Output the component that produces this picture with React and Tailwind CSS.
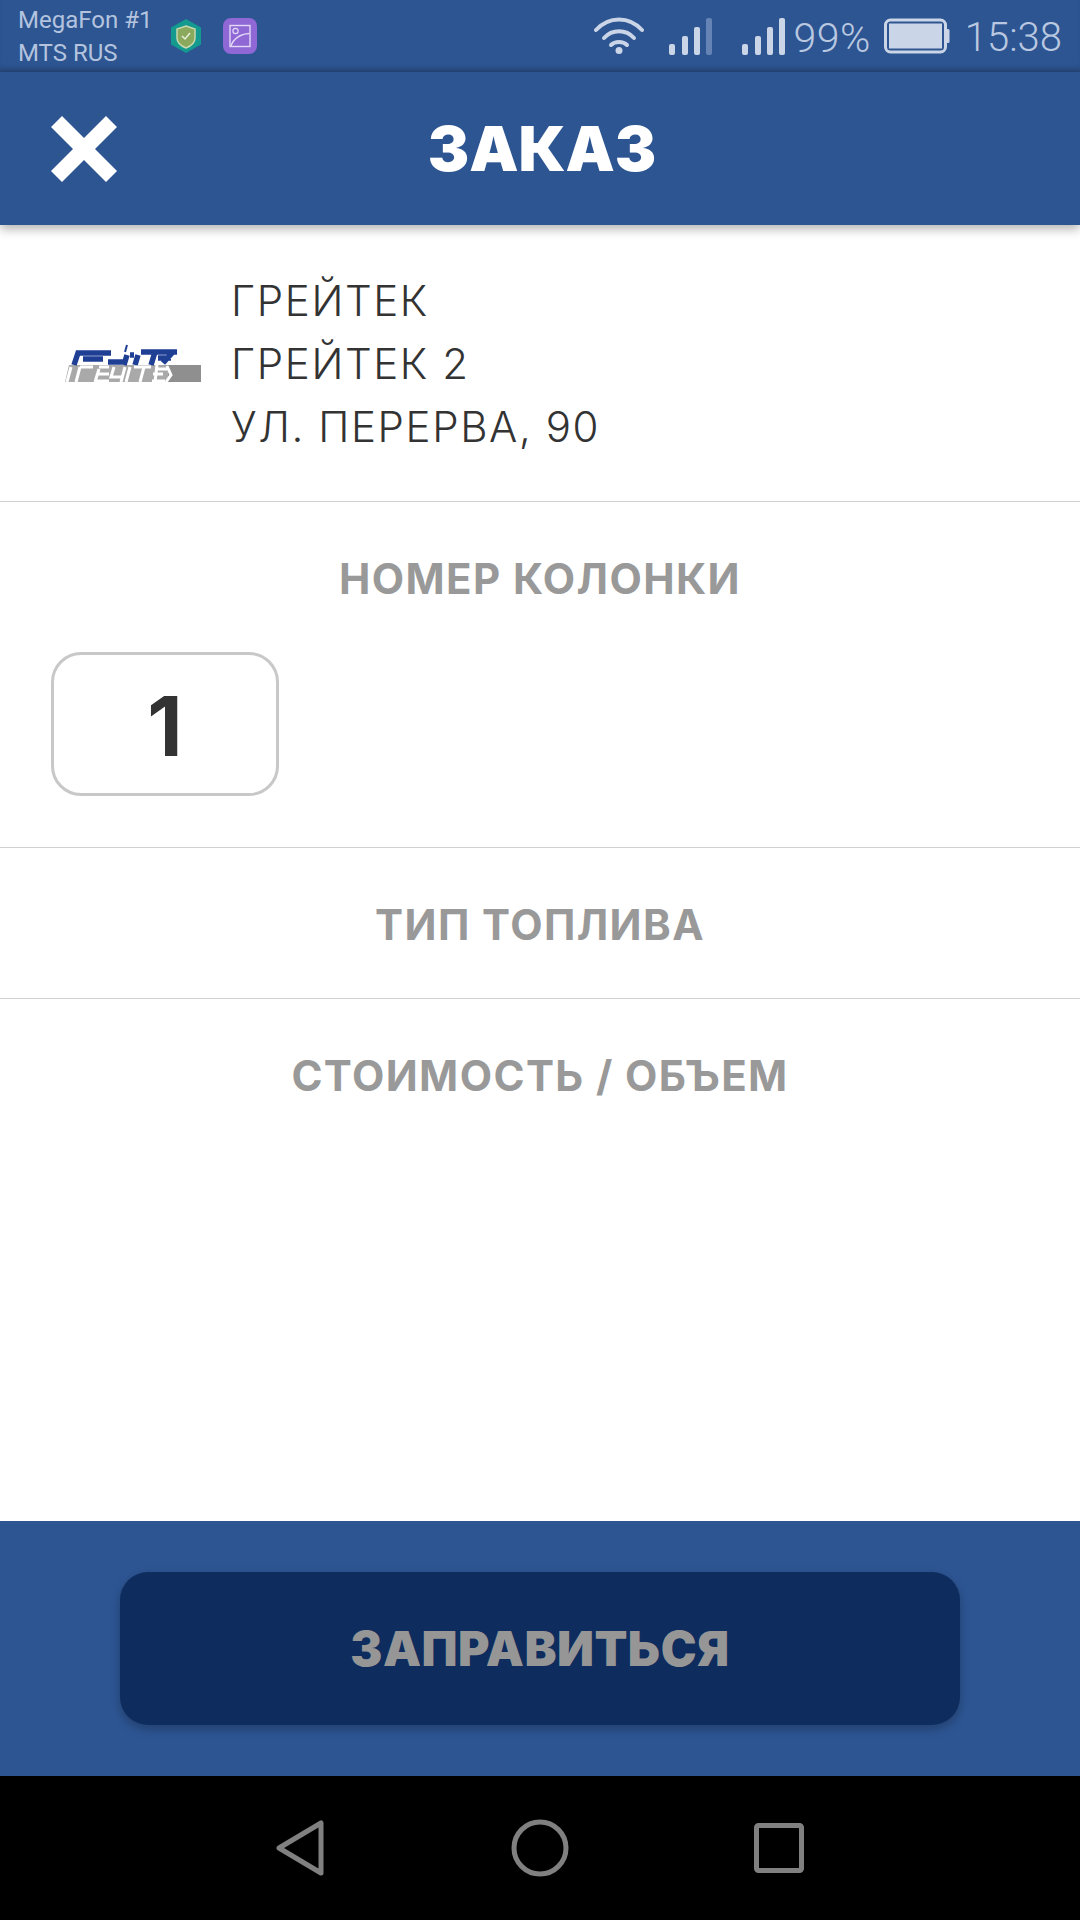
const sans = { fontFamily: '"Inter","Liberation Sans",sans-serif' };

function Signal({ dim }) {
  return (
    <svg width="43" height="37" viewBox="0 0 43 37">
      <g fill="#cbd5e8">
        <rect x="0" y="26" width="6" height="11" rx="2" />
        <rect x="13" y="18" width="6" height="19" rx="2" />
        <rect x="25" y="9" width="6" height="28" rx="2" />
        <rect x="37" y="0" width="6" height="37" rx="2" fill={dim ? "#6583b4" : "#cbd5e8"} />
      </g>
    </svg>
  );
}

function Logo() {
  return (
    <svg className="blur-[0.6px]" width="138" height="40" viewBox="0 0 138 40">
      <path d="M2 39 L6 22 H138 V39 Z" fill="#a9a9a9" />
      <rect x="105" y="22" width="33" height="17" fill="#8f8f8f" />
      <g fill="none" stroke="#1f3f95" strokeWidth="5.500">
        <path d="M11 22 L15 10 H48" />
        <path d="M20 16 H40 M45 19 H60 M64 12 L61 22 M67 12 H71 M75 12 L72 22 M78 9 H114 M92 9 L88 22 M95 15 H108 M110 9 L100 20" />
        <path d="M62 9 L64 2" strokeWidth="2" />
      </g>
      <g fill="none" stroke="#ffffff" strokeWidth="3">
        <path d="M8 24 L4 39 M17 24 L13 39 M17 24 H30 M36 26 L32 39 M36 24 H46 M34 31 H46 M33 38 H46 M51 24 L48 34 H60 M62 24 L58 39 M67 24 L63 39 M71 24 H88 M81 24 L77 39 M92 26 H104 M90 31 H100 M89 38 H102" />
        <path d="M94 22 L92 39" />
      </g>
      <path d="M103 39 L108 32 L104 23" fill="none" stroke="#ffffff" strokeWidth="3" />
    </svg>
  );
}

function Divider() {
  return <div className="h-px bg-[#d0d0d0]" />;
}

function SectionTitle({ children }) {
  return (
    <div className="text-center text-[42px] leading-[46px] font-bold tracking-[1.4px] text-[#999999]">
      {children}
    </div>
  );
}

export default function App() {
  return (
    <div className="w-[1080px] h-[1920px] flex flex-col bg-white overflow-hidden" style={sans}>
      <div className="h-[72px] bg-[#2d5592] flex items-center justify-between pl-[18px] pr-[18px] shadow-[inset_0_-6px_6px_-4px_rgba(0,0,0,0.25)]" style={{ fontFamily: "Roboto, sans-serif" }}>
        <div className="flex items-center">
          <div className="text-[24px] leading-[33px] text-[#b4c4de] w-[152px] whitespace-nowrap pt-[2px]">
            <div>MegaFon #1</div>
            <div>MTS RUS</div>
          </div>
          <svg width="32" height="36" viewBox="0 0 32 36">
            <path d="M16 1 L31 9.500 V26.500 L16 35 L1 26.500 V9.500 Z" fill="#149a8f" />
            <path d="M16 8 L25 11 V20 C25 25 21 28 16 30 C11 28 7 25 7 20 V11 Z" fill="#8aa95c" stroke="#c8d8b0" strokeWidth="1.500" />
            <path d="M12 18 L15 21 L20 15" fill="none" stroke="#e8f0d8" strokeWidth="1.500" />
          </svg>
          <svg className="ml-[21px]" width="34" height="36" viewBox="0 0 34 36">
            <rect width="34" height="36" rx="8" fill="#9068d6" />
            <rect x="7" y="7.500" width="20" height="21" fill="none" stroke="#e2d8f5" strokeWidth="1.400" />
            <circle cx="12.500" cy="13" r="2.600" fill="none" stroke="#e2d8f5" strokeWidth="1.200" />
            <path d="M8 28 C10 21 17 16 26.500 15.500" fill="none" stroke="#e2d8f5" strokeWidth="1.400" />
          </svg>
        </div>
        <div className="flex items-center text-[#b9c8e0]">
          <svg width="50" height="38" viewBox="0 0 50 38" fill="none" stroke="#cbd5e8" strokeLinecap="round" strokeWidth="4">
            <path d="M2 13 C15 -1 35 -1 48 13" />
            <path d="M10 21 C18 12 32 12 40 21" />
            <path d="M17 28 C21 24 29 24 33 28" />
            <circle cx="25" cy="33.500" r="3.500" fill="#cbd5e8" stroke="none" />
          </svg>
          <div className="ml-[25px]"><Signal dim /></div>
          <div className="ml-[30px]"><Signal /></div>
          <div className="ml-[9px] pt-[3px] text-[41px] leading-[40px] font-light tracking-[0.5px]">99%</div>
          <svg className="ml-[13px]" width="66" height="36" viewBox="0 0 66 36">
            <rect x="1.500" y="2" width="60" height="32" rx="5" fill="none" stroke="#cbd5e8" strokeWidth="3" />
            <rect x="5" y="5.500" width="53" height="25" fill="#cbd5e8" />
            <rect x="62" y="11" width="3.500" height="14" rx="1.500" fill="#cbd5e8" />
          </svg>
          <div className="ml-[15px] pt-[3px] text-[40px] leading-[40px] font-light">15:38</div>
        </div>
      </div>

      <div className="h-[153px] bg-[#2d5592] relative flex items-center justify-center shadow-[0_4px_10px_rgba(0,0,0,0.3)] z-10">
        <svg className="absolute left-[51px] top-[44px]" width="66" height="66" viewBox="0 0 66 66">
          <path d="M11 0 L33 22 L55 0 L66 11 L44 33 L66 55 L55 66 L33 44 L11 66 L0 55 L22 33 L0 11 Z" fill="#ffffff" />
        </svg>
        <div className="text-[62px] leading-[64px] font-black text-white pl-[4px] pt-[1px]">ЗАКАЗ</div>
      </div>

      <div className="h-[276px] flex items-center pl-[63px]">
        <Logo />
        <div className="ml-[30px] text-[42px] leading-[63px] font-[350] tracking-[1.6px] text-[#333333]">
          <div>ГРЕЙТЕК</div>
          <div>ГРЕЙТЕК 2</div>
          <div>УЛ. ПЕРЕРВА, 90</div>
        </div>
      </div>
      <Divider />

      <div className="h-[345px] flex flex-col pt-[54px]">
        <SectionTitle>НОМЕР КОЛОНКИ</SectionTitle>
        <div className="mt-[50px] ml-[51px] w-[228px] h-[144px] pt-[6px] border-[3px] border-[#c8c8c8] rounded-[30px] flex items-center justify-center text-[82px] leading-none font-bold text-[#333333]">
          1
        </div>
      </div>
      <Divider />

      <div className="h-[150px] pt-[54px]">
        <SectionTitle>ТИП ТОПЛИВА</SectionTitle>
      </div>
      <Divider />

      <div className="flex-1 pt-[54px]">
        <SectionTitle>СТОИМОСТЬ / ОБЪЕМ</SectionTitle>
      </div>

      <div className="h-[255px] bg-[#2d5592] flex items-center justify-center">
        <div className="w-[840px] h-[153px] rounded-[28px] bg-[#0e2c5e] shadow-[0_4px_10px_rgba(0,0,0,0.25)] flex items-center justify-center text-[48px] font-black tracking-[0.5px] text-[#969696]">
          ЗАПРАВИТЬСЯ
        </div>
      </div>

      <div className="h-[144px] bg-black flex items-center">
        <svg className="ml-[276px]" width="50" height="56" viewBox="0 0 50 56">
          <path d="M45 3 L45 53 L3 28 Z" fill="none" stroke="#808080" strokeWidth="5" strokeLinejoin="round" />
        </svg>
        <svg className="ml-[185px]" width="58" height="58" viewBox="0 0 58 58">
          <circle cx="29" cy="29" r="26" fill="none" stroke="#808080" strokeWidth="5" />
        </svg>
        <svg className="ml-[185px]" width="50" height="50" viewBox="0 0 50 50">
          <rect x="2.500" y="2.500" width="45" height="45" rx="2" fill="none" stroke="#808080" strokeWidth="5" />
        </svg>
      </div>
    </div>
  );
}
